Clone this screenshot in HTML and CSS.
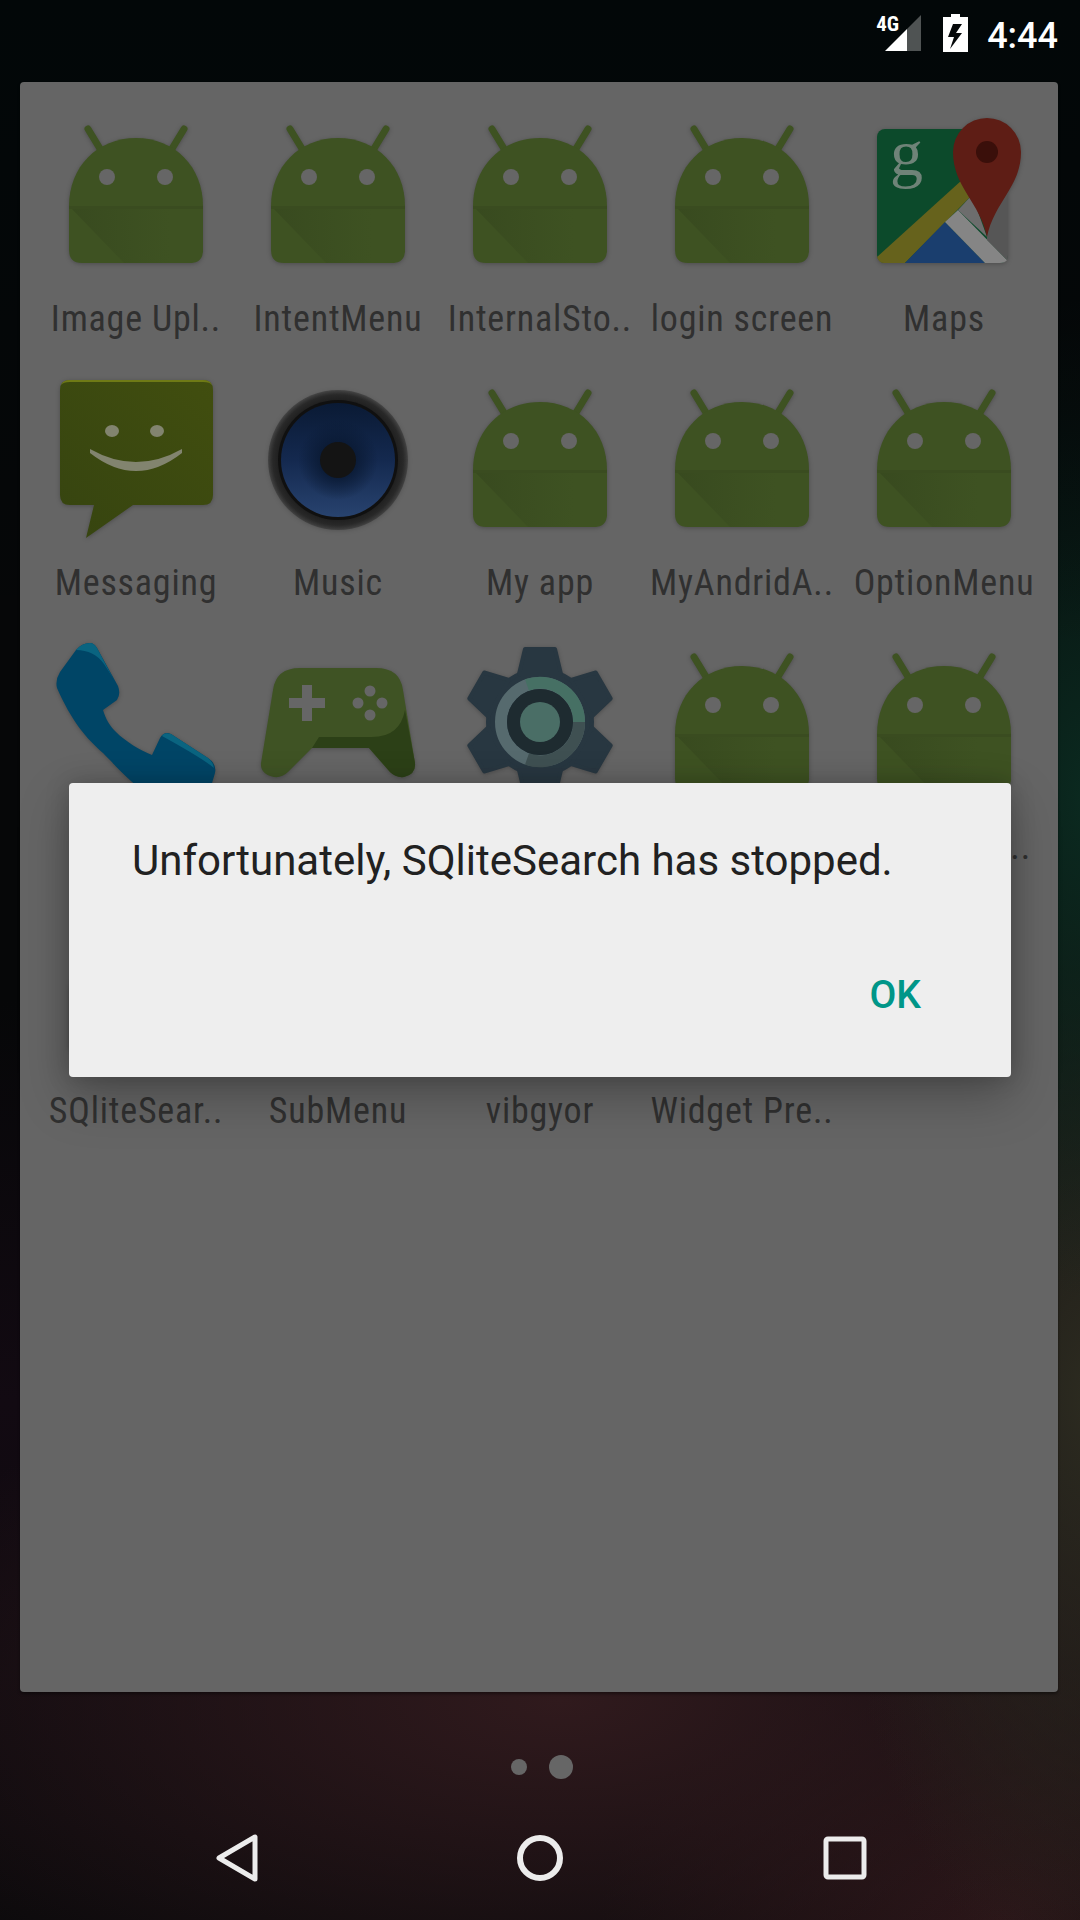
FILE: index.html
```html
<!DOCTYPE html>
<html lang="en">
<head>
    <meta charset="UTF-8">
    <meta name="viewport" content="width=device-width, initial-scale=1.0">
    <title>Launcher</title>
    <link rel="stylesheet" href="styles.css">
</head>
<body>

<svg class="defs" width="0" height="0">
    <defs>
        <linearGradient id="fold" x1="0" y1="0" x2="1" y2="0">
            <stop offset="0" stop-color="#384a1f"/>
            <stop offset=".75" stop-color="#3e5222"/>
        </linearGradient>
    </defs>
    <symbol id="android" viewBox="0 0 168 168">
        <path d="M36 17 50 40M132 17 118 40" stroke="#3e5222" stroke-width="7" stroke-linecap="round"/>
        <path d="M17 94C17 55 45 26 84 26S151 55 151 94V138Q151 151 138 151H30Q17 151 17 138Z" fill="#3e5222"/>
        <path d="M17 94H151V140L140 151H72Z" fill="url(#fold)"/>
        <rect x="17" y="94" width="134" height="3" fill="#3a4c20"/>
        <circle cx="55" cy="65" r="8" fill="#666"/>
        <circle cx="113" cy="65" r="8" fill="#666"/>
    </symbol>
</svg>

<div class="status-bar">
    <span class="net">4G</span>
    <svg class="signal" width="36" height="36" viewBox="0 0 36 36">
        <path d="M36 0V36H22V14Z" fill="#4f5353"/>
        <path d="M22 14V36H0Z" fill="#fff"/>
    </svg>
    <svg class="battery" width="25" height="38" viewBox="0 0 25 38">
        <path d="M8 0H17V3H25V38H0V3H8Z" fill="#fff"/>
        <path d="M10 10H19L13 19H19L7 35 11 23H5Z" fill="#050809"/>
    </svg>
    <span class="clock">4:44</span>
</div>

<div class="panel">
    <div class="app">
        <svg class="icon"><use href="#android"/></svg>
        <span class="label">Image Upl..</span>
    </div>
    <div class="app">
        <svg class="icon"><use href="#android"/></svg>
        <span class="label">IntentMenu</span>
    </div>
    <div class="app">
        <svg class="icon"><use href="#android"/></svg>
        <span class="label">InternalSto..</span>
    </div>
    <div class="app">
        <svg class="icon"><use href="#android"/></svg>
        <span class="label">login screen</span>
    </div>
    <div class="app">
        <svg class="icon" viewBox="0 0 168 168">
            <rect x="17" y="17" width="131" height="134" rx="8" fill="#0c4a2b"/>
            <path d="M17 145 102 68 112 83 45 151H24Q19 151 17 145Z" fill="#66621c"/>
            <path d="M45 151 85 110 125 151Z" fill="#1a3e6e"/>
            <path d="M85 110 98 98 147 148Q145 151 140 151H125Z" fill="#858585"/>
            <path d="M98 98 112 83 127 125Z" fill="#6d6d6d"/>
            <path d="M127 70H148V143Q148 146 147 148L127 128Z" fill="#565656"/>
            <text class="maps-g" x="30" y="63">g</text>
            <path d="M127 125C120 90 93 75 93 40A34 34 0 1 1 161 40C161 75 134 90 127 125Z" fill="#5e1d15"/>
            <circle cx="127" cy="40" r="11" fill="#3a0f0a"/>
        </svg>
        <span class="label">Maps</span>
    </div>

    <div class="app">
        <svg class="icon" viewBox="0 0 168 168">
            <defs>
                <linearGradient id="msg" x1="0" y1="1" x2="1" y2="0">
                    <stop offset="0" stop-color="#364410"/>
                    <stop offset="1" stop-color="#414e0f"/>
                </linearGradient>
            </defs>
            <path d="M18 4H151Q161 4 161 14V119Q161 129 151 129H81L34 162 42 129H18Q8 129 8 119V14Q8 4 18 4Z" fill="url(#msg)"/>
            <path d="M18 4H151Q158 4 160 9Q158 6 151 6H18Q11 6 9 9Q11 4 18 4Z" fill="#6f7a16"/>
            <ellipse cx="60" cy="55" rx="7" ry="6" fill="#82846f"/>
            <ellipse cx="105" cy="55" rx="7" ry="6" fill="#82846f"/>
            <path d="M38 73Q84 99 130 73V77Q84 113 38 77Z" fill="#82846f"/>
        </svg>
        <span class="label">Messaging</span>
    </div>
    <div class="app">
        <svg class="icon" viewBox="0 0 168 168">
            <defs>
                <linearGradient id="cone" x1="0" y1="0" x2="0" y2="1">
                    <stop offset="0" stop-color="#0a1a34"/>
                    <stop offset=".5" stop-color="#14294f"/>
                    <stop offset="1" stop-color="#28436f"/>
                </linearGradient>
                <radialGradient id="rim">
                    <stop offset=".8" stop-color="#1a1a1a"/>
                    <stop offset=".93" stop-color="#282828"/>
                    <stop offset="1" stop-color="#2c2c2c" stop-opacity=".5"/>
                </radialGradient>
                <radialGradient id="cone-shade">
                    <stop offset=".3" stop-color="#0a1a34" stop-opacity=".9"/>
                    <stop offset=".7" stop-color="#0a1a34" stop-opacity="0"/>
                </radialGradient>
            </defs>
            <circle cx="84" cy="84" r="70" fill="url(#rim)"/>
            <circle cx="84" cy="84" r="60" fill="#101010"/>
            <circle cx="84" cy="84" r="57" fill="url(#cone)"/>
            <circle cx="84" cy="84" r="57" fill="url(#cone-shade)"/>
            <circle cx="84" cy="84" r="18" fill="#141414"/>
        </svg>
        <span class="label">Music</span>
    </div>
    <div class="app">
        <svg class="icon"><use href="#android"/></svg>
        <span class="label">My app</span>
    </div>
    <div class="app">
        <svg class="icon"><use href="#android"/></svg>
        <span class="label">MyAndridA..</span>
    </div>
    <div class="app">
        <svg class="icon"><use href="#android"/></svg>
        <span class="label">OptionMenu</span>
    </div>

    <div class="app">
        <svg class="icon" viewBox="0 0 168 168">
            <path d="M38 3Q42 3 45 8L66 46Q69 54 65 60L51 70C54 80 58 86 64 92C74 102 88 110 100 115L108 98Q112 91 119 94L156 118Q165 124 163 133L158 150H90C76 140 62 124 51 113C34 98 20 82 5 48Q3 40 8 32L24 10Q30 3 38 3Z" fill="#004566"/>
            <path d="M24 10Q30 3 38 3Q42 3 45 8L64 44Q60 36 52 24Q42 10 24 10Z" fill="#0a6480"/>
            <path d="M110 96Q112 92 119 94L156 118Q161 122 162 128Q150 118 110 96Z" fill="#0a6480"/>
        </svg>
        <span class="label"></span>
    </div>
    <div class="app">
        <svg class="icon" viewBox="0 0 168 168">
            <path d="M46 28H122Q146 28 149 50L161 123Q162 134 150 137Q142 138 136 132L115 108H58L34 132Q28 138 20 137Q6 134 7 123L19 50Q22 28 46 28Z" fill="#3f5324"/>
            <path d="M151 70 161 123Q162 134 150 137Q142 138 136 132L115 108H58L65 97H118Q146 97 151 70Z" fill="#2c4017"/>
            <path d="M48 45H58V58H71V68H58V81H48V68H35V58H48Z" fill="#666"/>
            <circle cx="116" cy="51" r="5.5" fill="#666"/>
            <circle cx="104" cy="63" r="5.5" fill="#666"/>
            <circle cx="128" cy="63" r="5.5" fill="#666"/>
            <circle cx="116" cy="75" r="5.5" fill="#666"/>
        </svg>
        <span class="label"></span>
    </div>
    <div class="app">
        <svg class="icon" viewBox="0 0 168 168">
            <g transform="translate(84 82)" fill="#283741" stroke="#283741" stroke-width="4" stroke-linejoin="round">
                <circle r="52"/>
                <path id="tooth" d="M-21 -48 -15 -73H15L21 -48Z"/>
                <use href="#tooth" transform="rotate(60)"/>
                <use href="#tooth" transform="rotate(120)"/>
                <use href="#tooth" transform="rotate(180)"/>
                <use href="#tooth" transform="rotate(240)"/>
                <use href="#tooth" transform="rotate(300)"/>
            </g>
            <circle cx="84" cy="82" r="39" fill="none" stroke="#566a6e" stroke-width="12"/>
            <path d="M71 45A39 39 0 0 1 123 82" fill="none" stroke="#467064" stroke-width="12"/>
            <path d="M123 82A39 39 0 0 1 71 119" fill="none" stroke="#3f5052" stroke-width="12"/>
            <circle cx="84" cy="82" r="33" fill="#1e2b30"/>
            <circle cx="84" cy="82" r="20" fill="#4a6e66"/>
        </svg>
        <span class="label"></span>
    </div>
    <div class="app">
        <svg class="icon"><use href="#android"/></svg>
        <span class="label"></span>
    </div>
    <div class="app">
        <svg class="icon"><use href="#android"/></svg>
        <span class="label">SharedPre..</span>
    </div>

    <div class="app">
        <svg class="icon"><use href="#android"/></svg>
        <span class="label">SQliteSear..</span>
    </div>
    <div class="app">
        <svg class="icon"><use href="#android"/></svg>
        <span class="label">SubMenu</span>
    </div>
    <div class="app">
        <svg class="icon"><use href="#android"/></svg>
        <span class="label">vibgyor</span>
    </div>
    <div class="app">
        <svg class="icon"><use href="#android"/></svg>
        <span class="label">Widget Pre..</span>
    </div>
</div>

<div class="pager">
    <span class="dot"></span>
    <span class="dot current"></span>
</div>

<div class="nav-bar">
    <svg width="44" height="50" viewBox="0 0 44 50">
        <path d="M40 4V46L4 25Z" fill="none" stroke="#ececec" stroke-width="5" stroke-linejoin="round"/>
    </svg>
    <svg width="46" height="46" viewBox="0 0 46 46">
        <circle cx="23" cy="23" r="20" fill="none" stroke="#ececec" stroke-width="6"/>
    </svg>
    <svg class="recents" width="44" height="44" viewBox="0 0 44 44">
        <rect x="3" y="3" width="38" height="38" rx="2" fill="none" stroke="#ececec" stroke-width="5"/>
    </svg>
</div>

<div class="dialog">
    <p class="dialog-message">Unfortunately, SQliteSearch has stopped.</p>
    <div class="dialog-actions">
        <span class="dialog-ok">OK</span>
    </div>
</div>

</body>
</html>
```

FILE: styles.css
```css
html, body {
    margin: 0;
    padding: 0;
}
body {
    position: relative;
    width: 1080px;
    height: 1920px;
    overflow: hidden;
    font-family: Roboto, sans-serif;
    background-color: #060708;
    background-image:
        linear-gradient(to bottom, #020708 0, rgba(2, 7, 8, 0) 650px),
        radial-gradient(ellipse 240px 500px at 1090px 800px, #0b2a20 0, rgba(11, 42, 32, 0) 100%),
        radial-gradient(ellipse 260px 600px at 1090px 1400px, #2c2b20 0, rgba(44, 43, 32, 0) 100%),
        radial-gradient(ellipse 760px 340px at 560px 1700px, #301a1d 0, rgba(48, 26, 29, 0) 100%),
        radial-gradient(ellipse 400px 260px at 1000px 1920px, #2a1518 0, rgba(42, 21, 24, 0) 100%),
        linear-gradient(to bottom, #060708 1000px, #120a12 1400px, #0c0a0c 1920px);
}
.defs {
    position: absolute;
}

.status-bar {
    height: 82px;
    box-sizing: border-box;
    padding-right: 22px;
    display: flex;
    align-items: flex-start;
    color: #fff;
}
.net {
    margin-top: 15px;
    margin-left: auto;
    font-size: 21px;
    font-weight: 700;
    font-stretch: 75%;
    line-height: 18px;
}
.signal {
    margin-top: 15px;
    margin-left: -14px;
}
.battery {
    margin-top: 14px;
    margin-left: 22px;
}
.clock {
    margin-top: 15px;
    margin-left: 19px;
    font-size: 36px;
    font-weight: 500;
    line-height: 42px;
}

.panel {
    height: 1610px;
    margin: 0 22px 0 20px;
    box-sizing: border-box;
    padding: 30px 13px 0 15px;
    display: grid;
    grid-template-columns: repeat(5, 202px);
    grid-auto-rows: 236px;
    row-gap: 28px;
    background-color: #656565;
    border-radius: 4px;
    box-shadow: 0 2px 3px rgba(0, 0, 0, .4);
}
.app {
    display: flex;
    flex-direction: column;
    align-items: center;
}
.icon {
    width: 168px;
    height: 168px;
    filter: drop-shadow(0 1px 2px rgba(0, 0, 0, .25));
}
.label {
    margin-top: 11px;
    font-size: 36px;
    font-stretch: 75%;
    line-height: 57px;
    letter-spacing: .8px;
    white-space: nowrap;
    color: #303030;
}
.maps-g {
    font-family: "Liberation Serif", serif;
    font-size: 66px;
    fill: #6f8378;
}

.pager {
    height: 131px;
    box-sizing: border-box;
    padding: 63px 0 0 4px;
    display: flex;
    justify-content: center;
    align-items: flex-start;
    gap: 22px;
}
.dot {
    width: 16px;
    height: 16px;
    margin-top: 4px;
    border-radius: 50%;
    background-color: #666;
}
.dot.current {
    width: 24px;
    height: 24px;
    margin-top: 0;
}

.nav-bar {
    padding: 0 85px;
    display: grid;
    grid-template-columns: repeat(3, 1fr);
    justify-items: center;
    align-items: center;
    height: 70px;
}
.recents {
    margin-left: 3px;
}

.dialog {
    position: absolute;
    left: 69px;
    top: 783px;
    width: 942px;
    height: 294px;
    box-sizing: border-box;
    padding: 48px 90px 0 63px;
    background-color: #eee;
    border-radius: 4px;
    box-shadow: 0 20px 50px rgba(0, 0, 0, .25), 0 0 24px rgba(0, 0, 0, .2);
}
.dialog-message {
    margin: 0;
    font-size: 42px;
    line-height: 60px;
    white-space: nowrap;
    color: #212121;
}
.dialog-actions {
    margin-top: 82px;
    display: flex;
    justify-content: flex-end;
}
.dialog-ok {
    font-size: 39px;
    font-weight: 500;
    line-height: 44px;
    color: #009688;
}
```
